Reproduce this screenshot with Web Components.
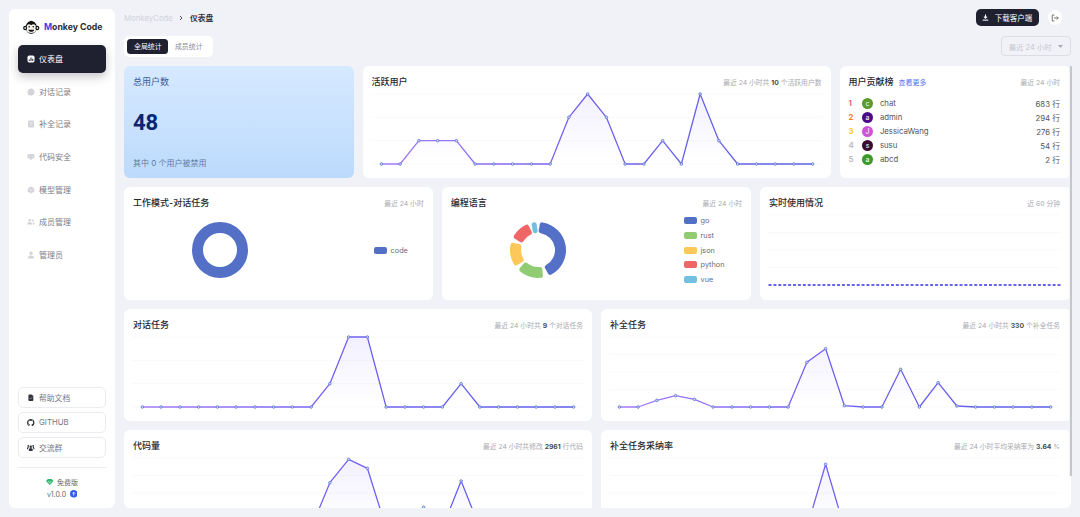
<!DOCTYPE html>
<html lang="zh-CN">
<head>
<meta charset="utf-8">
<title>Monkey Code</title>
<style>
html,body{margin:0;height:100%;}
body{background:#f0f2f8;font-family:"Inter","Noto Sans CJK SC",sans-serif;color:#333;overflow:hidden;}
</style>
</head>
<body>
<mc-app>
  <mc-sidebar slot="side">
    <mc-nav icon="dash" active>仪表盘</mc-nav>
    <mc-nav icon="chat">对话记录</mc-nav>
    <mc-nav icon="doc">补全记录</mc-nav>
    <mc-nav icon="shield">代码安全</mc-nav>
    <mc-nav icon="cube">模型管理</mc-nav>
    <mc-nav icon="team">成员管理</mc-nav>
    <mc-nav icon="user">管理员</mc-nav>
    <mc-link slot="links" icon="file">帮助文档</mc-link>
    <mc-link slot="links" icon="github">GITHUB</mc-link>
    <mc-link slot="links" icon="group">交流群</mc-link>
  </mc-sidebar>

  <mc-topbar slot="top"></mc-topbar>
  <mc-toolbar slot="top"></mc-toolbar>

  <mc-row cols="229.5px 468px 1fr">
    <mc-stat></mc-stat>
    <mc-card heading="活跃用户">
      <span slot="sub">最近 24 小时共 <mc-num>10</mc-num> 个活跃用户数</span>
      <line-chart lines="4" data="0,0,23.3,23.3,23.3,0,0,0,0,0,46.7,70,46.7,0,0,23.3,0,70,23.3,0,0,0,0,0"></line-chart>
    </mc-card>
    <mc-card heading="用户贡献榜" edge>
      <mc-more slot="after">查看更多</mc-more>
      <span slot="sub">最近 24 小时</span>
      <mc-rank>
        <mc-rank-row rank="1" letter="c" color="#5a9a2e" value="683 行" tone="#ff5c72">chat</mc-rank-row>
        <mc-rank-row rank="2" letter="a" color="#4b0a8a" value="294 行" tone="#ff7a2a">admin</mc-rank-row>
        <mc-rank-row rank="3" letter="J" color="#cf52d9" value="276 行" tone="#ffc62e">JessicaWang</mc-rank-row>
        <mc-rank-row rank="4" letter="s" color="#3d0a33" value="54 行" tone="#bcbec4">susu</mc-rank-row>
        <mc-rank-row rank="5" letter="a" color="#3d9a2a" value="2 行" tone="#bcbec4">abcd</mc-rank-row>
      </mc-rank>
    </mc-card>
  </mc-row>

  <mc-row cols="308.7px 309.3px 1fr">
    <mc-card heading="工作模式-对话任务">
      <span slot="sub">最近 24 小时</span>
      <donut-chart legend="241" segments="0,360,#5470c6,code"></donut-chart>
    </mc-card>
    <mc-card heading="编程语言">
      <span slot="sub">最近 24 小时</span>
      <donut-chart legend="233.3" rounded segments="3,158,#5470c6,go;168,226,#91cc75,rust;233,287,#fdc85a,json;295,340,#ee6666,python;345,358,#73c0de,vue"></donut-chart>
    </mc-card>
    <mc-card heading="实时使用情况" edge>
      <span slot="sub">近 60 分钟</span>
      <line-chart lines="5" width="291" inset="1" live data="0"></line-chart>
    </mc-card>
  </mc-row>

  <mc-row cols="468px 1fr">
    <mc-card heading="对话任务">
      <span slot="sub">最近 24 小时共 <mc-num>9</mc-num> 个对话任务</span>
      <line-chart lines="4" data="0,0,0,0,0,0,0,0,0,0,23.3,70,70,0,0,0,0,23.3,0,0,0,0,0,0"></line-chart>
    </mc-card>
    <mc-card heading="补全任务" edge>
      <span slot="sub">最近 24 小时共 <mc-num>330</mc-num> 个补全任务</span>
      <line-chart lines="5" data="0,0,6.7,11.3,7.7,0,0,0,0,0,44.7,58.3,1.3,0,0,37.7,0,24.3,1,0,0,0,0,0"></line-chart>
    </mc-card>
  </mc-row>

  <mc-row cols="468px 1fr">
    <mc-card heading="代码量">
      <span slot="sub">最近 24 小时共修改 <mc-num>2961</mc-num> 行代码</span>
      <line-chart lines="5" data="0,0,0,0,0,0,0,0,0,0,45.3,68.7,59.7,0,0,20.7,0,47,0,0,0,0,0,0"></line-chart>
    </mc-card>
    <mc-card heading="补全任务采纳率" edge>
      <span slot="sub">最近 24 小时平均采纳率为 <mc-num>3.64</mc-num> %</span>
      <line-chart lines="5" data="0,0,0,0,0,0,0,0,0,0,0,63.7,0,0,0,0,0,0,0,0,0,0,0,0"></line-chart>
    </mc-card>
  </mc-row>
</mc-app>

<script>
const ICONS = {
  dash:'<svg viewBox="0 0 16 16"><rect x="1" y="1" width="14" height="14" rx="3.5" fill="#fff"/><path d="M4.5 12V9M8 12V5M11.5 12V7.5" stroke="#1f2030" stroke-width="2" fill="none"/></svg>',
  chat:'<svg viewBox="0 0 16 16"><path d="M8 1a7 7 0 1 1-3.6 13L1.5 15l.9-3A7 7 0 0 1 8 1z" fill="#d3d4d9"/></svg>',
  doc:'<svg viewBox="0 0 16 16"><rect x="2" y="1" width="12" height="14" rx="2" fill="#d3d4d9"/><path d="M5 5h6M5 8h6M5 11h3" stroke="#f4f4f6" stroke-width="1.2"/></svg>',
  shield:'<svg viewBox="0 0 16 16"><path d="M3.5 2h9A2.5 2.5 0 0 1 15 4.5v4A2.5 2.5 0 0 1 12.5 11H11l-3 3.5L5 11H3.500A2.500 2.500 0 0 1 1 8.500v-4A2.500 2.500 0 0 1 3.500 2z" fill="#d3d4d9"/><path d="M6 5L4.500 6.500 6 8M10 5l1.500 1.500L10 8" stroke="#f4f4f6" stroke-width="1" fill="none"/></svg>',
  cube:'<svg viewBox="0 0 16 16"><path d="M8 1l6.500 3.500v7L8 15l-6.500-3.500v-7z" fill="#d3d4d9"/><path d="M1.500 4.500L8 8l6.500-3.500M8 8v7" stroke="#f4f4f6" stroke-width="1" fill="none"/></svg>',
  team:'<svg viewBox="0 0 16 16" fill="#d3d4d9"><circle cx="5.500" cy="4.500" r="2.700"/><path d="M0.500 13c0-3 2-4.800 5-4.800s5 1.800 5 4.800z"/><circle cx="12" cy="5" r="2"/><path d="M11.500 8.500c2.300 0 4 1.500 4 4.500h-3.500c0-1.800-.2-3.200-1.300-4.300z"/></svg>',
  user:'<svg viewBox="0 0 16 16" fill="#d3d4d9"><circle cx="8" cy="4.500" r="3.300"/><path d="M1.500 15c0-4 2.500-6 6.500-6s6.500 2 6.500 6z"/></svg>',
  file:'<svg viewBox="0 0 16 16"><path d="M3 3a2 2 0 0 1 2-2h5l3.500 3.500V13a2 2 0 0 1-2 2H5a2 2 0 0 1-2-2z" fill="#33343c"/><path d="M6 9l1.500 1.500L10.500 7.500" stroke="#fff" stroke-width="1.100" fill="none"/></svg>',
  github:'<svg viewBox="0 0 16 16"><path fill="#33343c" d="M8 0C3.580 0 0 3.580 0 8c0 3.540 2.290 6.530 5.470 7.590.4.070.55-.17.55-.38 0-.19-.010-.82-.010-1.490-2.010.37-2.530-.49-2.690-.94-.09-.23-.48-.94-.82-1.130-.28-.15-.68-.52-.010-.53.630-.010 1.080.58 1.230.82.720 1.210 1.870.87 2.330.66.070-.52.280-.87.510-1.070-1.780-.2-3.640-.89-3.640-3.950 0-.87.310-1.590.82-2.150-.080-.2-.360-1.020.080-2.120 0 0 .670-.210 2.200.820.640-.180 1.320-.270 2-.270s1.360.090 2 .270c1.530-1.040 2.200-.820 2.200-.820.440 1.100.160 1.920.080 2.120.510.560.820 1.270.820 2.150 0 3.070-1.870 3.750-3.650 3.950.290.250.540.730.540 1.480 0 1.070-.010 1.930-.010 2.200 0 .210.150.460.550.380A8.010 8.010 0 0 0 16 8c0-4.420-3.580-8-8-8z"/></svg>',
  group:'<svg viewBox="0 0 16 16" fill="#33343c"><circle cx="8" cy="6" r="2.600"/><circle cx="2.800" cy="4" r="1.900"/><circle cx="13.200" cy="4" r="1.900"/><path d="M8 8.500c3 0 4.500 2 4.500 5 0 1-1 1.500-4.500 1.500s-4.500-.5-4.500-1.500c0-3 1.500-5 4.500-5z"/><path d="M2.500 6.500c-1.500 0-2.500 1.500-2.500 3.500 0 .8.800 1 2.300 1 .2-1.700.7-3 1.700-4-.4-.3-1-.500-1.500-.500zM13.500 6.500c1.500 0 2.500 1.500 2.500 3.500 0 .8-.800 1-2.300 1-.2-1.700-.7-3-1.700-4 .4-.3 1-.500 1.500-.500z"/></svg>'
};

function comp(name, css, html, init){
  customElements.define(name, class extends HTMLElement{
    connectedCallback(){
      if(this.shadowRoot) return;
      const r = this.attachShadow({mode:'open'});
      r.innerHTML = '<style>'+css+'</style>'+(typeof html==='function'?html(this):html);
      if(init) init(this,r);
    }
  });
}

comp('mc-app',`
  :host{display:flex;box-sizing:border-box;height:100vh;padding:9px 9px 9.3px 9px;gap:9px;position:relative;}
  .main{flex:1;min-width:0;display:flex;flex-direction:column;}
  .scroll{flex:1;min-height:0;margin-top:9px;overflow:hidden;border-radius:6px;display:flex;flex-direction:column;gap:8.8px;}
  .thumb{position:absolute;left:1068.6px;top:65.7px;width:2.400px;height:410.300px;background:#c6c7cb;border-left:.6px solid #f0f2f8;border-radius:1px;}
`,`<slot name="side"></slot><div class="main"><slot name="top"></slot><div class="scroll"><slot></slot></div></div><div class="thumb"></div>`);

comp('mc-sidebar',`
  :host{display:flex;flex-direction:column;box-sizing:border-box;width:106px;flex:none;background:#fff;border-radius:6px;padding:11px 9px 8.700px;}
  .logo{display:flex;align-items:center;height:14px;margin:0 0 11px 5px;gap:4.500px;font-size:8.700px;font-weight:700;color:#2a2b33;white-space:nowrap;}
  .logo svg{width:16.500px;height:14.500px;flex:none;}
  .logo i{font-style:normal;color:#3a3ff0;}
  .nav{display:flex;flex-direction:column;gap:4.700px;}
  .links{margin-top:auto;display:flex;flex-direction:column;gap:4.600px;}
  .foot{margin-top:9px;border-top:1px solid #ebecf0;padding-top:9px;display:flex;flex-direction:column;align-items:center;gap:2.500px;font-size:7px;color:#666;}
  .foot div{display:flex;align-items:center;gap:3.500px;height:10px;}
  .foot svg{width:7.500px;height:7.500px;}
`,`
  <div class="logo">
    <svg viewBox="0 0 24 20">
      <circle cx="3.400" cy="11" r="3.200" fill="#111"/><circle cx="3.400" cy="11" r="1.500" fill="#eee"/>
      <circle cx="20.600" cy="11" r="3.200" fill="#111"/><circle cx="20.600" cy="11" r="1.500" fill="#eee"/>
      <path d="M12 .500c1 0 1.500.3 2 .9 3.800 1 6 4.400 6 8.600 0 5.500-3.600 9.600-8 9.600s-8-4.100-8-9.600c0-4.200 2.200-7.600 6-8.600.5-.6 1-.9 2-.9z" fill="#111"/>
      <path d="M8.600 5.500c1.300 0 2.500.6 3.400 1.500.9-.9 2.100-1.500 3.400-1.500 2 0 3.200 1.500 3.200 3.500 0 1-.3 1.800-.7 2.400.6.800.9 1.600.9 2.500 0 2.600-3 4.400-6.800 4.400s-6.800-1.800-6.800-4.400c0-.9.3-1.700.9-2.500-.4-.6-.7-1.400-.7-2.400 0-2 1.200-3.500 3.200-3.500z" fill="#f4f1ea"/>
      <circle cx="9" cy="9.300" r="1.200" fill="#111"/><circle cx="15" cy="9.300" r="1.200" fill="#111"/>
      <path d="M7.800 13.600h8.400c-.4 2-2 3-4.200 3s-3.800-1-4.200-3z" fill="#111"/>
    </svg>
    <span><i>M</i>onkey Code</span>
  </div>
  <div class="nav"><slot></slot></div>
  <div class="links"><slot name="links"></slot></div>
  <div class="foot">
    <div><svg viewBox="0 0 16 16"><path d="M4 2h8l4 4.500L8 15 0 6.500z" fill="#2fb46e"/><path d="M4.500 7L8 10l3.500-3" stroke="#fff" stroke-width="1.500" fill="none"/></svg><span>免费版</span></div>
    <div><span>v1.0.0</span><svg viewBox="0 0 16 16"><circle cx="8" cy="8" r="8" fill="#2f5be8"/><path d="M8 12V6M5.500 7.500L8 4.500l2.500 3" stroke="#fff" stroke-width="1.800" fill="none"/></svg></div>
  </div>`);

comp('mc-nav',`
  :host{display:flex;align-items:center;height:28px;box-sizing:border-box;padding:0 0 1px 9px;gap:4px;border-radius:5px;font-size:8px;color:#7c7d84;}
  :host([active]){background:#1f2030;color:#fff;box-shadow:0 4px 10px rgba(31,32,48,.25);}
  svg{width:8px;height:8px;flex:none;margin-top:1px;}
`,el=>`${ICONS[el.getAttribute('icon')]}<slot></slot>`);

comp('mc-link',`
  :host{display:flex;align-items:center;height:20.400px;box-sizing:border-box;padding-left:8px;gap:4.500px;border:1px solid #ebecf0;border-radius:5px;font-size:7.800px;color:#77787f;}
  svg{width:7.500px;height:7.500px;flex:none;}
`,el=>`${ICONS[el.getAttribute('icon')]}<slot></slot>`);

comp('mc-topbar',`
  :host{display:flex;align-items:center;height:17.300px;font-size:7.800px;}
  .a{color:#d2d4da;}
  .c{margin:0 5px 0 4px;width:8px;height:8px;}
  .b{color:#33343c;font-weight:700;}
  .dl{margin-left:auto;display:flex;align-items:center;gap:5.500px;height:17.300px;box-sizing:border-box;padding:0 6px;width:62.700px;background:#1f2030;border-radius:5px;color:#fff;font-size:7.500px;white-space:nowrap;}
  .dl svg{width:7px;height:7px;flex:none;}
  .out{margin:0 9px 0 8.600px;width:14.500px;height:14.500px;border-radius:50%;background:#fff;display:flex;align-items:center;justify-content:center;}
  .out svg{width:8px;height:8px;}
`,`<span class="a">MonkeyCode</span>
  <svg class="c" viewBox="0 0 8 8"><path d="M3 2l2 2-2 2" stroke="#555" stroke-width="1" fill="none"/></svg>
  <span class="b">仪表盘</span>
  <div class="dl"><svg viewBox="0 0 16 16"><path d="M8 1v8M4.500 6L8 9.500 11.500 6" stroke="#fff" stroke-width="2.400" fill="none"/><path d="M1.500 14h13" stroke="#fff" stroke-width="2.400"/></svg><span>下载客户端</span></div>
  <div class="out"><svg viewBox="0 0 16 16" fill="none" stroke="#444" stroke-width="1.400"><path d="M7 2H2.500v12H7M6 8h8.500M11.500 5l3 3-3 3"/></svg></div>`);

comp('mc-toolbar',`
  :host{display:flex;align-items:center;justify-content:space-between;margin-top:9.400px;}
  .tabs{display:flex;align-items:center;background:#fff;border-radius:5px;height:21px;width:88.700px;box-sizing:border-box;padding:0 3.300px;font-size:6.900px;}
  .on{display:flex;align-items:center;justify-content:center;width:41px;height:15px;background:#1f2030;border-radius:3.500px;color:#fff;}
  .off{margin-left:6.700px;color:#8a8b92;}
  .sel{display:flex;align-items:center;box-sizing:border-box;width:70.300px;height:20.400px;padding:0 7px 0 7px;border:1px solid #dcdee4;border-radius:4px;color:#c6c8ce;font-size:7.400px;justify-content:space-between;white-space:nowrap;}
  .sel svg{width:5px;height:3px;}
`,`<div class="tabs"><div class="on">全局统计</div><div class="off">成员统计</div></div>
  <div class="sel"><span>最近 24 小时</span><svg viewBox="0 0 10 6"><path d="M0 0h10L5 6z" fill="#a8aab0"/></svg></div>`);

comp('mc-row',`
  :host{display:grid;flex:none;height:112.700px;gap:0 9px;}
`,'<slot></slot>',el=>{el.style.gridTemplateColumns=el.getAttribute('cols');});

comp('mc-stat',`
  :host{display:flex;flex-direction:column;justify-content:space-between;box-sizing:border-box;padding:10px 9px 9px;border-radius:6px;background:linear-gradient(180deg,#d6e9ff,#bcdafc);min-width:0;}
  .t{font-size:9px;line-height:12px;color:#3d5c98;}
  .n{font-family:"Roboto",sans-serif;font-weight:700;font-size:22px;line-height:24px;color:#0a2472;}
  .s{font-size:8px;line-height:11px;color:#5f7a9c;}
`,`<div class="t">总用户数</div><div class="n">48</div><div class="s">其中 0 个用户被禁用</div>`);

comp('mc-card',`
  :host{display:flex;flex-direction:column;box-sizing:border-box;background:#fff;border-radius:6px;padding:10px 9px 0;min-width:0;overflow:hidden;}
  :host([edge]){padding-right:11px;}
  header{display:flex;align-items:center;height:12px;flex:none;}
  h2{margin:0;font-size:9px;font-weight:500;line-height:12px;color:#26272e;white-space:nowrap;}
  .after{margin-left:5px;display:flex;}
  .sub{margin-left:auto;font-size:6.800px;color:#a9aab0;white-space:nowrap;}
  .body{flex:1;min-height:0;display:flex;flex-direction:column;}
`,el=>`<header><h2>${el.getAttribute('heading')}</h2><div class="after"><slot name="after"></slot></div><div class="sub"><slot name="sub"></slot></div></header><div class="body"><slot></slot></div>`);

comp('mc-num',`:host{display:inline;font-weight:700;color:#4a4b52;}`,'<slot></slot>');
comp('mc-more',`:host{display:block;font-size:7px;color:#5a6ff0;}`,'<slot></slot>');
comp('mc-rank',`:host{display:flex;flex-direction:column;margin-top:8.600px;}`,'<slot></slot>');

comp('mc-rank-row',`
  :host{display:flex;align-items:center;height:14px;font-size:7.800px;color:#55565d;}
  .r{width:13.400px;font-weight:700;flex:none;}
  .av{width:11.300px;height:11.300px;border-radius:50%;display:flex;align-items:center;justify-content:center;color:#fff;font-size:7px;margin-right:6.700px;flex:none;}
  .v{margin-left:auto;}
`,el=>`<span class="r" style="color:${el.getAttribute('tone')}">${el.getAttribute('rank')}</span><span class="av" style="background:${el.getAttribute('color')}">${el.getAttribute('letter')}</span><slot></slot><span class="v">${el.getAttribute('value')}</span>`);

let gid = 0;
comp('line-chart',`
  :host{display:block;flex:none;}
  svg{display:block;overflow:visible;}
`,el=>{
  const W = +(el.getAttribute('width')||450), top = 6, H = 70;
  const lines = +el.getAttribute('lines');
  const live = el.hasAttribute('live');
  let d = el.getAttribute('data').split(',').map(Number);
  if(live) d = Array(60).fill(0);
  const inset = el.hasAttribute('inset') ? +el.getAttribute('inset') : W/48;
  const n = d.length;
  const pts = d.map((v,i)=>[inset+i*(W-2*inset)/(n-1), top+H-v]);
  const id = 'g'+(++gid);
  let grid='';
  for(let i=0;i<lines-(live?1:0);i++){const y=top+i*H/(lines-1);grid+=`<line x1="0" x2="${W}" y1="${y}" y2="${y}" stroke="#f1f2f5" stroke-width=".7" stroke-dasharray="2.500 1.500"/>`;}
  const p = pts.map(q=>q[0].toFixed(2)+','+q[1].toFixed(2)).join(' ');
  const area = live?'':`<polygon points="${pts[0][0]},${top+H} ${p} ${pts[n-1][0]},${top+H}" fill="url(#a${id})"/>`;
  const dots = pts.map(q=>live
    ?`<rect x="${(q[0]-1.500).toFixed(2)}" y="${q[1]-.9}" width="3" height="1.800" fill="#5a55ee"/>`
    :`<circle cx="${q[0].toFixed(2)}" cy="${q[1].toFixed(2)}" r="1.300" fill="#cfd7f6" stroke="#5b75cc" stroke-width=".8"/>`).join('');
  const line = live?'':`<polyline points="${p}" fill="none" stroke="url(#s${id})" stroke-width="1.300" stroke-linejoin="round"/>`;
  return `<svg width="${W}" height="${top+H+5}" viewBox="0 0 ${W} ${top+H+5}">
    <defs>
      <linearGradient id="s${id}" gradientUnits="userSpaceOnUse" x1="0" x2="${W}" y1="0" y2="0"><stop offset="0" stop-color="#a97cf8"/><stop offset=".45" stop-color="#7461f2"/><stop offset="1" stop-color="#5a62e8"/></linearGradient>
      <linearGradient id="a${id}" gradientUnits="userSpaceOnUse" x1="0" x2="0" y1="${top}" y2="${top+H}"><stop offset="0" stop-color="#7a5cff" stop-opacity=".09"/><stop offset="1" stop-color="#7a5cff" stop-opacity="0"/></linearGradient>
    </defs>${grid}${area}${line}${dots}</svg>`;
});

comp('donut-chart',`
  :host{display:grid;align-items:center;flex:1;padding-bottom:9px;}
  svg{width:60px;height:60px;margin-left:57px;display:block;}
  .lg{display:flex;flex-direction:column;}
  .it{display:flex;align-items:center;height:14.700px;gap:3.300px;font-size:7.300px;color:#6a6b72;}
  .it i{width:13.300px;height:7px;border-radius:2px;display:block;}
`,el=>{
  el.style.gridTemplateColumns = el.getAttribute('legend')+'px auto';
  const segs = el.getAttribute('segments').split(';').map(s=>{const a=s.split(',');return {a:+a[0],b:+a[1],c:a[2],n:a[3]};});
  const P=(r,a)=>{const t=(a-90)*Math.PI/180;return (30+r*Math.cos(t)).toFixed(2)+' '+(30+r*Math.sin(t)).toFixed(2);};
  let shapes='';
  if(el.hasAttribute('rounded')){
    const r0=19.5,r1=25.5,ins=6.5;
    segs.forEach(s=>{
      let a=s.a+ins,b=s.b-ins; if(b<a){a=b=(s.a+s.b)/2;}
      const lg=(b-a)>180?1:0;
      shapes+=`<path d="M${P(r1,a)}A${r1} ${r1} 0 ${lg} 1 ${P(r1,b)}L${P(r0,b)}A${r0} ${r0} 0 ${lg} 0 ${P(r0,a)}Z" fill="${s.c}" stroke="${s.c}" stroke-width="5" stroke-linejoin="round"/>`;
    });
  } else {
    shapes=`<circle cx="30" cy="30" r="22.500" fill="none" stroke="${segs[0].c}" stroke-width="11"/>`;
  }
  const lg=segs.map(s=>`<div class="it"><i style="background:${s.c}"></i><span>${s.n}</span></div>`).join('');
  return `<svg viewBox="0 0 60 60">${shapes}</svg><div class="lg">${lg}</div>`;
});
</script>
</body>
</html>
